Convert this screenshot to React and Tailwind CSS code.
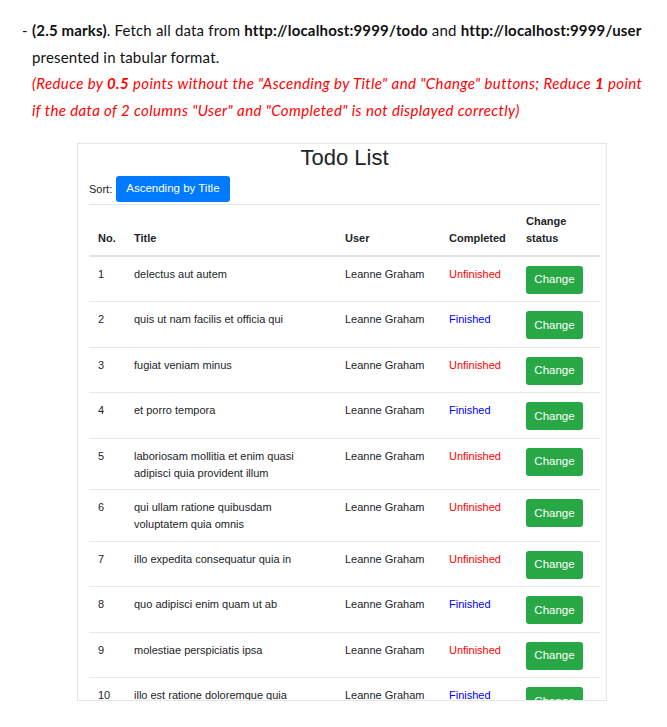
import React from "react";

const todos = [
  { id: 1, title: "delectus aut autem", done: false },
  { id: 2, title: "quis ut nam facilis et officia qui", done: true },
  { id: 3, title: "fugiat veniam minus", done: false },
  { id: 4, title: "et porro tempora", done: true },
  { id: 5, title: "laboriosam mollitia et enim quasi adipisci quia provident illum", done: false },
  { id: 6, title: "qui ullam ratione quibusdam voluptatem quia omnis", done: false },
  { id: 7, title: "illo expedita consequatur quia in", done: false },
  { id: 8, title: "quo adipisci enim quam ut ab", done: true },
  { id: 9, title: "molestiae perspiciatis ipsa", done: false },
  { id: 10, title: "illo est ratione doloremque quia", done: true },
];

const App = () => {
  return (
    <div className="w-[667px] h-[727px] bg-white overflow-hidden relative">
      {/* Assignment text */}
      <div className="pt-[17px] pl-[22px] text-[15px] leading-[26.5px] text-[#111] font-['Lato',sans-serif] whitespace-nowrap">
        <div className="flex">
          <span className="w-[10px] shrink-0">-</span>
          <div>
            <p className="tracking-[0.17px]">
              <b>(2.5 marks)</b>. Fetch all data from <b>http://localhost:9999/todo</b> and{" "}
              <b>http://localhost:9999/user</b>
              <br />
              presented in tabular format.
            </p>
            <p className="text-[#ff0000] italic tracking-[0.39px]">
              (Reduce by <b>0.5</b> points without the "Ascending by Title" and "Change" buttons; Reduce{" "}
              <b>1</b> point
              <br />
              if the data of 2 columns "User" and "Completed" is not displayed correctly)
            </p>
          </div>
        </div>
      </div>

      {/* Embedded app screenshot */}
      <div className="absolute left-[77px] top-[143px] w-[530px] h-[558px] border border-[#e6e6e6] overflow-hidden bg-white font-['Liberation_Sans',sans-serif] text-[#212529]">
        <div className="pl-[11px] pr-[6px]">
          <h1 className="text-center text-[22px] leading-[27px] text-[#212529]">Todo List</h1>
          <div className="flex items-center gap-[4px] pt-[5px] pb-[1.5px] border-b border-[#e3e6ea]">
            <span className="text-[11px]">Sort:</span>
            <button className="h-[26px] px-[10px] rounded-[3px] bg-[#007bff] text-white text-[11.5px]">
              Ascending by Title
            </button>
          </div>

          <table className="w-full border-collapse text-[11px] leading-[17px] table-fixed">
            <colgroup>
              <col className="w-[36px]" />
              <col className="w-[211px]" />
              <col className="w-[104px]" />
              <col className="w-[77px]" />
              <col />
            </colgroup>
            <thead>
              <tr className="border-b-2 border-[#dee2e6]">
                <th className="text-left align-bottom font-bold px-[9px] py-[8px]">No.</th>
                <th className="text-left align-bottom font-bold px-[9px] py-[8px]">Title</th>
                <th className="text-left align-bottom font-bold px-[9px] py-[8px]">User</th>
                <th className="text-left align-bottom font-bold px-[9px] py-[8px]">Completed</th>
                <th className="text-left align-bottom font-bold px-[9px] py-[8px]">
                  Change
                  <br />
                  status
                </th>
              </tr>
            </thead>
            <tbody>
              {todos.map((t) => (
                <tr key={t.id} className="border-b border-[#e7eaed]">
                  <td className="align-top px-[9px] pt-[9px] pb-[7.5px]">{t.id}</td>
                  <td className="align-top pl-[9px] pr-[20px] pt-[9px] pb-[7.5px]">{t.title}</td>
                  <td className="align-top px-[9px] pt-[9px] pb-[7.5px]">Leanne Graham</td>
                  <td
                    className={
                      "align-top px-[9px] pt-[9px] pb-[7.5px] " +
                      (t.done ? "text-[#0000ff]" : "text-[#ff0000]")
                    }
                  >
                    {t.done ? "Finished" : "Unfinished"}
                  </td>
                  <td className="align-top px-[9px] pt-[9px] pb-[7.5px]">
                    <button className="h-[28px] w-[57px] rounded-[3px] bg-[#28a745] text-white text-[11.5px]">
                      Change
                    </button>
                  </td>
                </tr>
              ))}
            </tbody>
          </table>
        </div>
      </div>
    </div>
  );
};

export default App;
